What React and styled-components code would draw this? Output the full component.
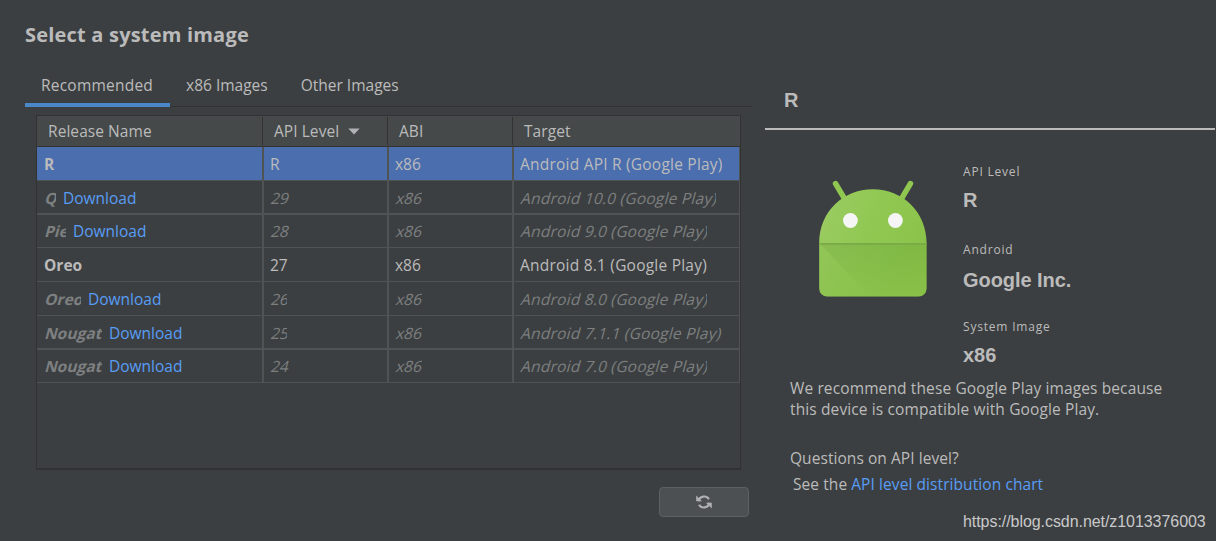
import React, { useState } from "react";
import styled, { createGlobalStyle, css } from "styled-components";

const images = [
  { name: "R", nameWidth: 12, level: "R", levelWidth: 20, target: "Android API R (Google Play)", targetWidth: 210, installed: true, height: 33, line: 1 },
  { name: "Q", nameWidth: 12, level: "29", levelWidth: 19, target: "Android 10.0 (Google Play)", targetWidth: 196, height: 32, line: 2 },
  { name: "Pie", nameWidth: 22, level: "28", levelWidth: 19, target: "Android 9.0 (Google Play)", targetWidth: 187, height: 32, line: 1 },
  { name: "Oreo", nameWidth: 40, level: "27", levelWidth: 20, target: "Android 8.1 (Google Play)", targetWidth: 200, installed: true, height: 33, line: 1 },
  { name: "Oreo", nameWidth: 37, level: "26", levelWidth: 17, target: "Android 8.0 (Google Play)", targetWidth: 187, height: 33, line: 1 },
  { name: "Nougat", nameWidth: 58, level: "25", levelWidth: 17, target: "Android 7.1.1 (Google Play)", targetWidth: 202, height: 32, line: 2 },
  { name: "Nougat", nameWidth: 58, level: "24", levelWidth: 19, target: "Android 7.0 (Google Play)", targetWidth: 187, height: 32, line: 1 },
];

const tabs = ["Recommended", "x86 Images", "Other Images"];

export default function App() {
  const [currentTab, setCurrentTab] = useState(0);
  const [currentSelected, setCurrentSelected] = useState(0);

  return (
    <>
      <GlobalStyle />
      <Container>
        <Chooser>
          <Title>Select a system image</Title>
          <Tabs>
            {tabs.map((tab, index) => (
              <Tab key={tab} $active={index === currentTab} onClick={() => setCurrentTab(index)}>
                {tab}
              </Tab>
            ))}
          </Tabs>
          <Table>
            <HeaderRow>
              <HeaderCell>Release Name</HeaderCell>
              <HeaderCell>
                API Level
                <SortArrow viewBox="0 0 12 7">
                  <path d="M0.3 0.4h11.4L6 6.6z" fill="#afb1b3" />
                </SortArrow>
              </HeaderCell>
              <HeaderCell>ABI</HeaderCell>
              <HeaderCell>Target</HeaderCell>
            </HeaderRow>
            {images.map((image, index) => (
              <Row
                key={index}
                $height={image.height}
                $line={image.line}
                $installed={image.installed}
                $selected={index === currentSelected}
                onClick={() => setCurrentSelected(index)}
              >
                <Cell>
                  <Value $bold $slanted={!image.installed} $width={image.nameWidth}>
                    <span>{image.name}</span>
                  </Value>
                  {!image.installed && <Download>Download</Download>}
                </Cell>
                <Cell>
                  <Value $slanted={!image.installed} $width={image.levelWidth}>
                    <span>{image.level}</span>
                  </Value>
                </Cell>
                <Cell>
                  <Value $slanted={!image.installed} $width={27}>
                    <span>x86</span>
                  </Value>
                </Cell>
                <Cell>
                  <Value $slanted={!image.installed} $spacing={0.22} $width={image.targetWidth}>
                    <span>{image.target}</span>
                  </Value>
                </Cell>
              </Row>
            ))}
          </Table>
          <RefreshButton aria-label="Refresh">
            <svg width="16" height="16" viewBox="0 0 16 16">
              <path d="M2.6 7.2A5.6 5.6 0 0 1 12.9 5.2M13.4 8.8A5.6 5.6 0 0 1 3.1 10.8" fill="none" stroke="#afb1b3" strokeWidth="2.2" />
              <path d="M0.2 1.4v5.8h5.8z M15.8 14.6V8.8H10z" fill="#afb1b3" />
            </svg>
          </RefreshButton>
        </Chooser>

        <Details>
          <DetailsTitle>R</DetailsTitle>
          <Summary>
            <AndroidLogo viewBox="0 0 110 118">
              <defs>
                <linearGradient id="head" x1="0" y1="0" x2="1" y2="0.4">
                  <stop offset="0" stopColor="#9ccc65" />
                  <stop offset="0.5" stopColor="#91c853" />
                  <stop offset="1" stopColor="#8bc34a" />
                </linearGradient>
                <linearGradient id="shade" x1="0.3" y1="0" x2="0.4" y2="1">
                  <stop offset="0" stopColor="#33691e" stopOpacity="0.1" />
                  <stop offset="1" stopColor="#33691e" stopOpacity="0" />
                </linearGradient>
              </defs>
              <path d="M17.5 4.5 27 20.5M92.5 4.5 83 20.5" stroke="#8fc750" strokeWidth="5.4" strokeLinecap="round" />
              <path d="M1.2 64C1.2 33 25 10.3 54.8 10.3S108.6 33 108.6 64v45.5a8 8 0 0 1-8 8H9.2a8 8 0 0 1-8-8z" fill="url(#head)" />
              <path d="M1.2 64H108.6v45.5a8 8 0 0 1-8 8H9.2a8 8 0 0 1-8-8z" fill="#7cb342" fillOpacity="0.2" />
              <path d="M1.2 64H108.6v45.5a8 8 0 0 1-8 8H52z" fill="url(#shade)" />
              <path d="M1.2 64.8h107.4" stroke="#7aaa47" strokeWidth="1.8" />
              <circle cx="32.4" cy="41.5" r="7.4" fill="#f5f5f5" />
              <circle cx="77.4" cy="41.5" r="7.4" fill="#f5f5f5" />
            </AndroidLogo>
            <Facts>
              <Fact $height={78}>
                <span>API Level</span>
                <strong>R</strong>
              </Fact>
              <Fact $height={77} $gap={5}>
                <span>Android</span>
                <strong>Google Inc.</strong>
              </Fact>
              <Fact $height={50}>
                <span>System Image</span>
                <strong>x86</strong>
              </Fact>
            </Facts>
          </Summary>
          <Recommendation>
            <span>We recommend these Google Play images because</span>
            <span>this device is compatible with Google Play.</span>
          </Recommendation>
          <Question>Questions on API level?</Question>
          <SeeChart>
            <span>See the</span>
            <a>API level distribution chart</a>
          </SeeChart>
          <Watermark>https://blog.csdn.net/z1013376003</Watermark>
        </Details>
      </Container>
    </>
  );
}

const GlobalStyle = createGlobalStyle`
  * {
    box-sizing: border-box;
  }
  body {
    margin: 0;
    background-color: #3c3f41;
  }
`;

const Container = styled.div`
  display: flex;
  width: 1216px;
  height: 541px;
  overflow: hidden;
  background-color: #3c3f41;
  color: #bbbbbb;
  font-family: "Open Sans", "Noto Sans", sans-serif;
  font-size: 15.5px;
  white-space: nowrap;
`;

const Chooser = styled.div`
  display: flex;
  flex-direction: column;
  width: 765px;
  padding: 20px 13px 0 25px;
`;

const Title = styled.h1`
  margin: 0;
  height: 48px;
  font-size: 20px;
  font-weight: 700;
  line-height: 30px;
  letter-spacing: 0.2px;
`;

const Tabs = styled.div`
  display: flex;
  height: 39px;
  background: linear-gradient(#323232, #323232) 0 38px / 100% 1px no-repeat;
`;

const Tab = styled.div`
  height: 39px;
  padding: 0 17px 0 16px;
  line-height: 35px;
  cursor: pointer;
  border-bottom: 4px solid ${({ $active }) => ($active ? "#4a88c7" : "transparent")};
  &:first-child {
    letter-spacing: 0.22px;
  }
`;

const Table = styled.div`
  width: 705px;
  height: 355px;
  margin: 8px 0 0 11px;
  border: 1px solid #323232;
  border-bottom-width: 2px;
`;

const columns = css`
  display: grid;
  grid-template-columns: 227px 125px 125px 226px;
`;

const HeaderRow = styled.div`
  ${columns}
  height: 31px;
  padding: 1px 0;
  border-bottom: 1px solid #323232;
  background-color: #45494a;
`;

const HeaderCell = styled.div`
  display: flex;
  align-items: center;
  margin-left: -2px;
  padding-left: 11px;
  border-left: 1px solid #323232;
  letter-spacing: 0.06px;
  &:first-child {
    margin-left: 0;
    border-left: none;
  }
`;

const SortArrow = styled.svg`
  width: 12px;
  height: 7px;
  margin-left: 9px;
`;

const Row = styled.div`
  ${columns}
  height: ${({ $height, $line }) => $height + $line}px;
  border-bottom: ${({ $line }) => $line}px solid #505354;
  background-color: ${({ $selected }) => ($selected ? "#4b6eaf" : "transparent")};
  color: ${({ $installed }) => ($installed ? "#bbbbbb" : "#7d7f80")};
  line-height: 21px;
  > div {
    padding-top: ${({ $height, $line }) => ($height + $line > 33 ? 7 : 6)}px;
  }
`;

const Cell = styled.div`
  display: flex;
  padding-left: 6px;
  border-right: 2px solid #505354;
  &:first-child {
    padding-left: 7px;
  }
  &:last-child {
    border-right-width: 1px;
  }
`;

const Value = styled.div`
  width: ${({ $width }) => $width}px;
  height: 22px;
  overflow: hidden;
  font-weight: ${({ $bold }) => ($bold ? 700 : 400)};
  letter-spacing: ${({ $spacing }) => $spacing || 0}px;
  span {
    display: inline-block;
    transform: ${({ $slanted }) => ($slanted ? "skewX(-15deg)" : "none")};
    transform-origin: 0 16px;
  }
`;

const Download = styled.a`
  margin-left: 7px;
  color: #589df6;
  cursor: pointer;
`;

const RefreshButton = styled.button`
  display: flex;
  align-items: center;
  justify-content: center;
  width: 90px;
  height: 30px;
  margin: 17px 0 0 634px;
  padding: 0;
  border: 1px solid #5e6060;
  border-radius: 4px;
  background-color: #4c5052;
`;

const Details = styled.div`
  display: flex;
  flex-direction: column;
  width: 450px;
`;

const DetailsTitle = styled.h2`
  margin: 0;
  height: 130px;
  padding: 85px 0 0 19px;
  border-bottom: 2px solid #bbbbbb;
  font-family: "Liberation Sans", Arial, sans-serif;
  font-size: 20px;
  line-height: 30px;
`;

const Summary = styled.div`
  display: flex;
  height: 248px;
  padding-left: 53px;
`;

const AndroidLogo = styled.svg`
  width: 110px;
  height: 118px;
  margin-top: 49px;
`;

const Facts = styled.div`
  padding: 32px 0 0 35px;
`;

const Fact = styled.div`
  display: flex;
  flex-direction: column;
  height: ${({ $height }) => $height}px;
  span {
    font-size: 12px;
    line-height: 20px;
    letter-spacing: 0.8px;
  }
  strong {
    margin-top: ${({ $gap }) => $gap || 3}px;
    font-family: "Liberation Sans", Arial, sans-serif;
    font-size: 20px;
    line-height: 30px;
    letter-spacing: -0.05px;
  }
`;

const Recommendation = styled.div`
  display: flex;
  flex-direction: column;
  height: 70px;
  padding-left: 25px;
  line-height: 21px;
  letter-spacing: 0.12px;
`;

const Question = styled.div`
  padding-left: 25px;
  line-height: 21px;
  letter-spacing: 0.06px;
`;

const SeeChart = styled.div`
  display: flex;
  gap: 4px;
  margin-top: 5px;
  padding-left: 28px;
  line-height: 21px;
  letter-spacing: 0.08px;
  a {
    color: #589df6;
  }
`;

const Watermark = styled.div`
  margin: 17px 0 0 198px;
  color: #c8c9ca;
  font-family: "Liberation Sans", Arial, sans-serif;
  font-size: 16px;
  line-height: 20px;
  letter-spacing: -0.06px;
`;
